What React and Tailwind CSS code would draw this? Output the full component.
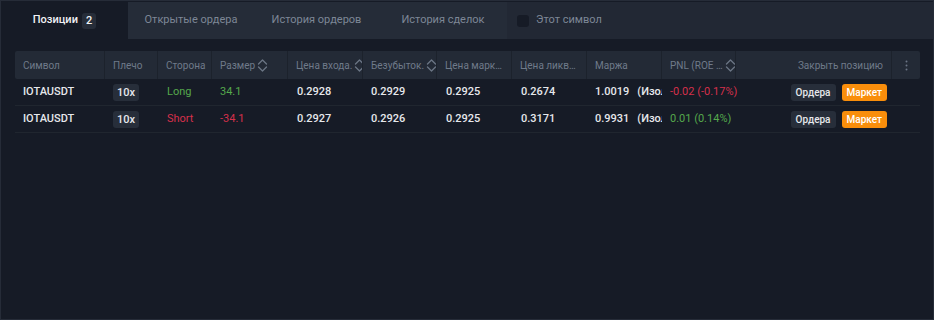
import React from 'react'

const COLS = 'grid-cols-[90px_53px_54px_76px_75px_74px_75px_75px_75px_74px_156px_28px]'

function SortIcon() {
  return (
    <svg width="11" height="15" viewBox="0 0 11 15" className="ml-[2px] shrink-0" fill="none">
      <path d="M1.5 6 L5.5 2 L9.5 6" stroke="#6b7585" strokeWidth="1.3" strokeLinecap="round" strokeLinejoin="round" />
      <path d="M1.5 9 L5.5 13 L9.5 9" stroke="#6b7585" strokeWidth="1.3" strokeLinecap="round" strokeLinejoin="round" />
    </svg>
  )
}

const HEADERS = [
  { label: 'Символ' },
  { label: 'Плечо' },
  { label: 'Сторона' },
  { label: 'Размер', sort: true },
  { label: 'Цена входа.', sort: true },
  { label: 'Безубыток.', sort: true },
  { label: 'Цена марк…' },
  { label: 'Цена ликв…' },
  { label: 'Маржа' },
  { label: 'PNL (ROE …', sort: true },
]

const ROWS = [
  {
    side: 'Long',
    size: '34.1',
    entry: '0.2928',
    be: '0.2929',
    mark: '0.2925',
    liq: '0.2674',
    margin: '1.0019',
    pnl: '-0.02 (-0.17%)',
    pnlUp: false,
  },
  {
    side: 'Short',
    size: '-34.1',
    entry: '0.2927',
    be: '0.2926',
    mark: '0.2925',
    liq: '0.3171',
    margin: '0.9931',
    pnl: '0.01 (0.14%)',
    pnlUp: true,
  },
]

export default function App() {
  return (
    <div
      className="h-[320px] w-[934px] overflow-hidden border border-[#262c38] bg-[#161b26] text-[11px] text-[#e6e8ec]"
      style={{ fontFamily: 'Roboto, "Noto Sans", sans-serif' }}
    >
      {/* tabs */}
      <div className="mt-px flex h-[37px] bg-[#222834] text-[11px]">
        <div className="flex w-[127px] items-center justify-center gap-[4px] bg-[#161b26] font-medium text-[#f0f2f5]">
          <span>Позиции</span>
          <span className="rounded-[3px] bg-[#262d39] px-[4px] leading-[16px]">2</span>
        </div>
        <div className="flex bg-[#252c38] text-[#7d8796]">
          <span className="flex w-[126px] items-center justify-center">Открытые ордера</span>
          <span className="flex w-[125px] items-center justify-center">История ордеров</span>
          <span className="flex w-[128px] items-center justify-center">История сделок</span>
        </div>
        <div className="flex items-center gap-[7px] pl-[10px] text-[#7d8796]">
          <span className="h-[12px] w-[12px] rounded-[3px] bg-[#161b26]" />
          <span>Этот символ</span>
        </div>
      </div>

      {/* table */}
      <div className="ml-[14px] mt-[12px] w-[905px]">
        <div className={`grid h-[28px] ${COLS} rounded-[2px] bg-[#232a36] text-[10px] text-[#6f7a8a]`}>
          {HEADERS.map((h) => (
            <div key={h.label} className="flex items-center overflow-hidden whitespace-nowrap border-r border-[#1c222c] pl-[8px]">
              <span>{h.label}</span>
              {h.sort && <SortIcon />}
            </div>
          ))}
          <div className="flex items-center justify-end border-r border-[#1c222c] pr-[8px]">Закрыть позицию</div>
          <div className="flex items-center justify-center">
            <svg width="3" height="11" viewBox="0 0 3 11">
              <circle cx="1.5" cy="1.5" r="1" fill="#6b7585" />
              <circle cx="1.5" cy="5.5" r="1" fill="#6b7585" />
              <circle cx="1.5" cy="9.5" r="1" fill="#6b7585" />
            </svg>
          </div>
        </div>

        {ROWS.map((r, i) => {
          const sideColor = r.side === 'Long' ? 'text-[#55a84c]' : 'text-[#d5304b]'
          return (
            <div key={i} className={`grid h-[27px] ${COLS} border-b border-[#20262f] font-medium`}>
              <div className="flex items-center pl-[8px]">IOTAUSDT</div>
              <div className="flex items-center pl-[8px]">
                <span className="rounded-[3px] bg-[#272e3a] px-[4px] leading-[17px]">10x</span>
              </div>
              <div className={`flex items-center pl-[9px] font-normal ${sideColor}`}>{r.side}</div>
              <div className={`flex items-center pl-[8px] font-normal ${sideColor}`}>{r.size}</div>
              <div className="flex items-center pl-[9px]">{r.entry}</div>
              <div className="flex items-center pl-[8px]">{r.be}</div>
              <div className="flex items-center pl-[9px]">{r.mark}</div>
              <div className="flex items-center pl-[9px]">{r.liq}</div>
              <div className="flex items-center overflow-hidden whitespace-nowrap pl-[8px]">
                <span>{r.margin}</span>
                <span className="ml-[8px]">(Изолированная)</span>
              </div>
              <div className={`flex items-center whitespace-nowrap pl-[8px] font-normal ${r.pnlUp ? 'text-[#55a84c]' : 'text-[#d5304b]'}`}>
                {r.pnl}
              </div>
              <div className="flex items-center justify-end gap-[6px] pr-[5px] text-[10px]">
                <button className="h-[17px] rounded-[3px] bg-[#272e3a] px-[5px] leading-[17px] text-[#e6e8ec]">Ордера</button>
                <button className="h-[17px] rounded-[3px] bg-[#f98e0b] px-[5px] leading-[17px] text-white">Маркет</button>
              </div>
              <div />
            </div>
          )
        })}
      </div>
    </div>
  )
}
